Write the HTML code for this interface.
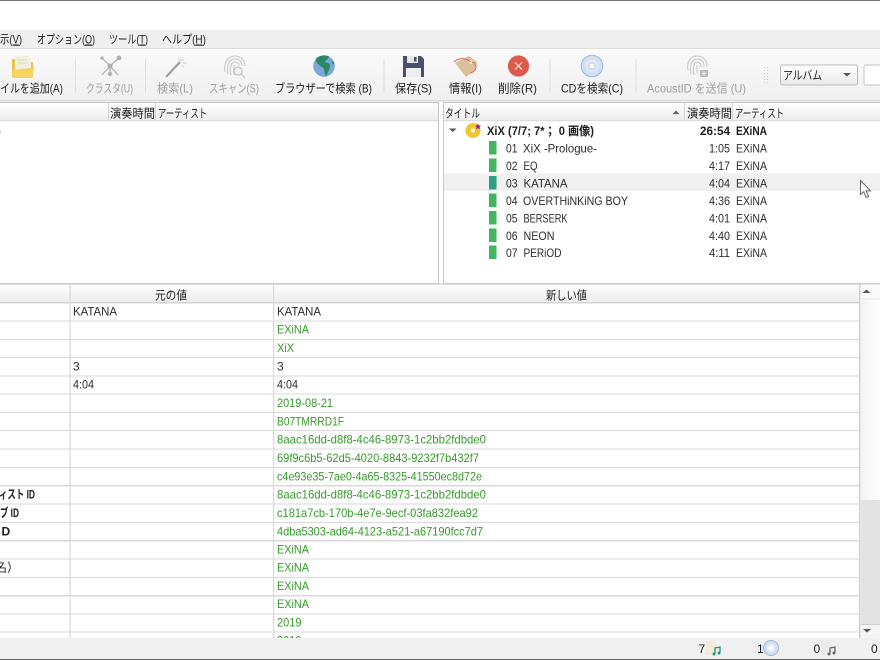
<!DOCTYPE html>
<html lang="ja"><head><meta charset="utf-8"><title>MusicBrainz Picard</title>
<style>
html,body{margin:0;padding:0;width:880px;height:660px;overflow:hidden;background:#fff}
svg{display:block;filter:blur(.3px)}
text{font-family:"Liberation Sans","Noto Sans CJK JP",sans-serif;font-size:12px;fill:#2c2c2c;lengthAdjust:spacingAndGlyphs}
.g{fill:#a0a0a0}.n{fill:#359a29}.b{font-weight:bold;fill:#1c1c1c}.d{fill:#1c1c1c}
</style></head><body>
<svg width="880" height="660" viewBox="0 0 880 660" xmlns="http://www.w3.org/2000/svg">
<defs>
<linearGradient id="tb" x1="0" y1="0" x2="0" y2="1"><stop offset="0" stop-color="#fafafa"/><stop offset="1" stop-color="#f0f0f0"/></linearGradient>
<linearGradient id="hd" x1="0" y1="0" x2="0" y2="1"><stop offset="0" stop-color="#fdfdfd"/><stop offset="1" stop-color="#ececec"/></linearGradient>
<linearGradient id="cb" x1="0" y1="0" x2="0" y2="1"><stop offset="0" stop-color="#fff"/><stop offset="1" stop-color="#e9e9e9"/></linearGradient>
<linearGradient id="th" x1="0" y1="0" x2="1" y2="0"><stop offset="0" stop-color="#f4f4f4"/><stop offset="1" stop-color="#fefefe"/></linearGradient>
</defs>
<rect width="880" height="660" fill="#fff"/>
<rect width="880" height="1" fill="#747474"/>
<!-- menu -->
<rect y="30" width="880" height="18" fill="#efefef"/>
<rect y="48" width="880" height="1" fill="#dcdcdc"/>
<text x="0" y="43.500" class="d" textLength="22" lengthAdjust="spacingAndGlyphs">示(<tspan text-decoration="underline">V</tspan>)</text>
<text x="37" y="43.500" class="d" textLength="58" lengthAdjust="spacingAndGlyphs">オプション(<tspan text-decoration="underline">O</tspan>)</text>
<text x="109" y="43.500" class="d" textLength="39" lengthAdjust="spacingAndGlyphs">ツール(<tspan text-decoration="underline">T</tspan>)</text>
<text x="162" y="43.500" class="d" textLength="44" lengthAdjust="spacingAndGlyphs">ヘルプ(<tspan text-decoration="underline">H</tspan>)</text>
<!-- toolbar -->
<rect y="49" width="880" height="51" fill="url(#tb)"/>
<rect y="100" width="880" height="1.500" fill="#dadada"/>
<g fill="#dedede"><rect x="75" y="59" width="1" height="33"/><rect x="145" y="59" width="1" height="33"/><rect x="383.500" y="59" width="1" height="33"/><rect x="549.500" y="59" width="1" height="33"/><rect x="635.500" y="59" width="1" height="33"/></g>
<!-- folder -->
<path d="M12 59h8l2 3h11v15H12z" fill="#e8c44f"/>
<path d="M15 56h13l3 3v12H15z" fill="#f2eedd"/>
<path d="M18 60h9M18 63h9" stroke="#e0dbc6" stroke-width="1"/>
<path d="M12 70l20-2 2 0-2 10H13z" fill="#f5d35e"/>
<!-- cluster -->
<g stroke="#b0b0b0" stroke-width="1.200" fill="#b0b0b0"><path d="M110 66L102 58M110 66L119 58M110 66L102 75M110 66L118 75M110 66V74" fill="none"/><circle cx="110" cy="66" r="2"/><circle cx="102" cy="58" r="1"/><circle cx="119" cy="58" r="1.800"/><circle cx="110" cy="74" r="1.500"/></g>
<!-- wand -->
<path d="M166 77L180 62" stroke="#a0a0a0" stroke-width="2.200"/>
<path d="M181 57v4M184 59l-2 2M187 63h-4M184 67l-2-2M178 58l2 3" stroke="#d2d2d2" stroke-width="1" fill="none"/>
<!-- fingerprint -->
<g fill="none" stroke="#cfcfcf" stroke-width="1.200"><path d="M225 72C223 60 230 56 235 56C241 56 245 61 245 66"/><path d="M228 74C226 63 230 59 235 59C240 59 242 62 242 66"/><path d="M231 75C229 66 232 62 235 62C238 62 239 64 239 66"/><path d="M234 75C233 70 234 66 235 65"/></g>
<circle cx="238" cy="71" r="4" fill="#f3f3f3" stroke="#c4c4c4" stroke-width="1.200"/><path d="M241 74l4 4" stroke="#c4c4c4" stroke-width="1.200"/>
<!-- globe -->
<circle cx="324" cy="66" r="10.800" fill="#7ba7d9"/>
<path d="M316 58.500C320 55 326 55 329 56.500L327 60C324 60 325 63 328 63C331 64 330 67 329 70L326 76.500C324 72 325 69 322 67C319 66 318 63 316 62z" fill="#2c8a63"/>
<path d="M332 60l2.500 3-2 2z" fill="#2c8a63"/>
<!-- floppy -->
<path d="M403 56h18l3 3v18h-21z" fill="#47506f"/>
<rect x="407" y="56" width="11" height="7" fill="#e6e6e6"/><rect x="414" y="57" width="2.500" height="4.500" fill="#47506f"/>
<rect x="406" y="68" width="15" height="9" fill="#eeeeee"/>
<!-- tag -->
<path d="M455 63L469 56L477 62L476 69L466 77z" fill="#dcc09a"/>
<circle cx="471" cy="62" r="1.800" fill="#f8f8f8"/>
<path d="M471 62C465 57 458 58 454 62M472 62C478 64 477 72 470 73" fill="none" stroke="#dd6555" stroke-width="1"/>
<!-- delete -->
<circle cx="518.500" cy="66" r="10.600" fill="#dd5a4c"/>
<path d="M515 62.500l7 7M522 62.500l-7 7" stroke="#fbe6e3" stroke-width="1.200"/>
<!-- cd -->
<circle cx="592" cy="66" r="10.800" fill="#cfdff5" stroke="#9db8e2" stroke-width="1"/>
<circle cx="592" cy="66" r="6.500" fill="#e4e8ee"/><circle cx="592" cy="66" r="3" fill="#fff" stroke="#c6cad2" stroke-width="1"/>
<!-- acoustid -->
<g fill="none" stroke="#cfcfcf" stroke-width="1.200"><path d="M688 71C686 60 692 56 697 56C703 56 707 60 707 67"/><path d="M691 74C689 63 693 59 697 59C702 59 704 62 704 67"/><path d="M694 75C692 66 695 62 697 62C700 62 701 64 701 67"/><path d="M697 73V65"/></g>
<rect x="700" y="70" width="8" height="7" fill="#bdbdbd"/><path d="M704 71.500v4M702 73.500h4" stroke="#eee" stroke-width="1"/>
<!-- grip -->
<g fill="#d0d0d0"><rect x="764" y="67" width="1" height="1"/><rect x="767" y="67" width="1" height="1"/><rect x="764" y="70" width="1" height="1"/><rect x="767" y="70" width="1" height="1"/><rect x="764" y="73" width="1" height="1"/><rect x="767" y="73" width="1" height="1"/><rect x="764" y="76" width="1" height="1"/><rect x="767" y="76" width="1" height="1"/><rect x="764" y="79" width="1" height="1"/><rect x="767" y="79" width="1" height="1"/><rect x="764" y="82" width="1" height="1"/><rect x="767" y="82" width="1" height="1"/></g>
<!-- combo -->
<rect x="780.500" y="65" width="77" height="20" rx="2" fill="url(#cb)" stroke="#bcbcbc"/>
<text x="783" y="79.500" class="d" textLength="39" lengthAdjust="spacingAndGlyphs">アルバム</text>
<path d="M843 73h8l-4 3.500z" fill="#555"/>
<rect x="864" y="65" width="20" height="20" rx="2" fill="#fff" stroke="#c4c4c4"/>
<!-- toolbar labels -->
<text x="0" y="92.500" class="d" textLength="63" lengthAdjust="spacingAndGlyphs">イルを追加(A)</text>
<text x="86" y="92.500" class="g" textLength="47" lengthAdjust="spacingAndGlyphs">クラスタ(U)</text>
<text x="157" y="92.500" class="g" textLength="36" lengthAdjust="spacingAndGlyphs">検索(L)</text>
<text x="209" y="92.500" class="g" textLength="50" lengthAdjust="spacingAndGlyphs">スキャン(S)</text>
<text x="275" y="92.500" class="d" textLength="97" lengthAdjust="spacingAndGlyphs">ブラウザーで検索 (B)</text>
<text x="395" y="92.500" class="d" textLength="37" lengthAdjust="spacingAndGlyphs">保存(S)</text>
<text x="449" y="92.500" class="d" textLength="33" lengthAdjust="spacingAndGlyphs">情報(I)</text>
<text x="498" y="92.500" class="d" textLength="39" lengthAdjust="spacingAndGlyphs">削除(R)</text>
<text x="561" y="92.500" class="d" textLength="62" lengthAdjust="spacingAndGlyphs">CDを検索(C)</text>
<text x="647" y="92.500" class="g" textLength="99" lengthAdjust="spacingAndGlyphs">AcoustID を送信 (U)</text>
<!-- upper panels -->
<rect x="-2" y="102.500" width="440.500" height="181" fill="#fff" stroke="#c8c8c8"/>
<rect x="443.500" y="102.500" width="440" height="181" fill="#fff" stroke="#c8c8c8"/>
<rect x="0" y="103" width="438" height="17" fill="url(#hd)"/>
<rect x="444" y="103" width="436" height="17" fill="url(#hd)"/>
<rect x="0" y="120" width="438" height="1.200" fill="#dcdcdc"/>
<rect x="444" y="120" width="436" height="1.200" fill="#dcdcdc"/>
<g fill="#d4d4d4"><rect x="108" y="103" width="1" height="17"/><rect x="155" y="103" width="1" height="17"/><rect x="684" y="103" width="1" height="17"/><rect x="732" y="103" width="1" height="17"/></g>
<text x="110" y="117.500" class="d" textLength="45" lengthAdjust="spacingAndGlyphs">演奏時間</text>
<text x="158" y="117.500" class="d" textLength="49" lengthAdjust="spacingAndGlyphs">アーティスト</text>
<text x="445" y="117.500" class="d" textLength="35" lengthAdjust="spacingAndGlyphs">タイトル</text>
<path d="M672.500 114h7l-3.500-3.500z" fill="#666"/>
<text x="687" y="117.500" class="d" textLength="45" lengthAdjust="spacingAndGlyphs">演奏時間</text>
<text x="735" y="117.500" class="d" textLength="49" lengthAdjust="spacingAndGlyphs">アーティスト</text>
<text x="-3" y="135">)</text>
<!-- tree -->
<rect x="444" y="173.500" width="436" height="17.500" fill="#f0f0f0"/>
<path d="M449 128.500h7.500l-3.750 3.500z" fill="#555"/>
<circle cx="473" cy="130.500" r="7.500" fill="#f2c52f"/><circle cx="473" cy="130.500" r="2" fill="#fff"/>
<path d="M478 123.500l1 2 2 .3-1.500 1.400.4 2-1.900-1-1.900 1 .4-2-1.500-1.400 2-.3z" fill="#8e2b92"/>
<text x="487" y="135" class="b" textLength="107" lengthAdjust="spacingAndGlyphs">XiX (7/7; 7*； 0 画像)</text>
<text x="700" y="135" class="b" textLength="30" lengthAdjust="spacingAndGlyphs">26:54</text>
<text x="736" y="135" class="b" textLength="31" lengthAdjust="spacingAndGlyphs">EXiNA</text>
<g fill="#40b75f"><rect x="489" y="141" width="7.500" height="13.500"/><rect x="489" y="158.500" width="7.500" height="13.500"/><rect x="489" y="193.500" width="7.500" height="13.500"/><rect x="489" y="211" width="7.500" height="13.500"/><rect x="489" y="228.500" width="7.500" height="13.500"/><rect x="489" y="245.500" width="7.500" height="13.500"/></g>
<rect x="489" y="176" width="7.500" height="13.500" fill="#2d9f85"/>
<text x="506" y="152.500" textLength="11.500" lengthAdjust="spacingAndGlyphs">01</text><text x="523" y="152.500" textLength="74" lengthAdjust="spacingAndGlyphs">XiX -Prologue-</text><text x="709" y="152.500" textLength="21" lengthAdjust="spacingAndGlyphs">1:05</text><text x="736" y="152.500" textLength="31" lengthAdjust="spacingAndGlyphs">EXiNA</text>
<text x="506" y="170" textLength="11.500" lengthAdjust="spacingAndGlyphs">02</text><text x="523.500" y="170" textLength="14" lengthAdjust="spacingAndGlyphs">EQ</text><text x="709" y="170" textLength="21" lengthAdjust="spacingAndGlyphs">4:17</text><text x="736" y="170" textLength="31" lengthAdjust="spacingAndGlyphs">EXiNA</text>
<text x="506" y="187.500" textLength="11.500" lengthAdjust="spacingAndGlyphs">03</text><text x="523.500" y="187.500" textLength="44" lengthAdjust="spacingAndGlyphs">KATANA</text><text x="709" y="187.500" textLength="21" lengthAdjust="spacingAndGlyphs">4:04</text><text x="736" y="187.500" textLength="31" lengthAdjust="spacingAndGlyphs">EXiNA</text>
<text x="506" y="205" textLength="11.500" lengthAdjust="spacingAndGlyphs">04</text><text x="523" y="205" textLength="105" lengthAdjust="spacingAndGlyphs">OVERTHiNKiNG BOY</text><text x="709" y="205" textLength="21" lengthAdjust="spacingAndGlyphs">4:36</text><text x="736" y="205" textLength="31" lengthAdjust="spacingAndGlyphs">EXiNA</text>
<text x="506" y="222.500" textLength="11.500" lengthAdjust="spacingAndGlyphs">05</text><text x="523.500" y="222.500" textLength="44" lengthAdjust="spacingAndGlyphs">BERSERK</text><text x="709" y="222.500" textLength="21" lengthAdjust="spacingAndGlyphs">4:01</text><text x="736" y="222.500" textLength="31" lengthAdjust="spacingAndGlyphs">EXiNA</text>
<text x="506" y="240" textLength="11.500" lengthAdjust="spacingAndGlyphs">06</text><text x="523.500" y="240" textLength="31" lengthAdjust="spacingAndGlyphs">NEON</text><text x="709" y="240" textLength="21" lengthAdjust="spacingAndGlyphs">4:40</text><text x="736" y="240" textLength="31" lengthAdjust="spacingAndGlyphs">EXiNA</text>
<text x="506" y="257" textLength="11.500" lengthAdjust="spacingAndGlyphs">07</text><text x="523.500" y="257" textLength="38" lengthAdjust="spacingAndGlyphs">PERiOD</text><text x="709" y="257" textLength="21" lengthAdjust="spacingAndGlyphs">4:11</text><text x="736" y="257" textLength="31" lengthAdjust="spacingAndGlyphs">EXiNA</text>
<!-- cursor -->
<path d="M860.500 180.500v14l3.200-2.800 2.300 5.800 2.600-1-2.400-5.600h4.300z" fill="#fff" stroke="#666" stroke-width="1"/>
<!-- table -->
<rect x="0" y="283.500" width="880" height="1.200" fill="#d0d0d0"/>
<rect x="0" y="285" width="859" height="17.500" fill="url(#hd)"/>
<rect x="0" y="302" width="859" height="1.500" fill="#d4d4d4"/>
<text x="155" y="299.500" class="d" textLength="32" lengthAdjust="spacingAndGlyphs">元の値</text>
<text x="546" y="299.500" class="d" textLength="41" lengthAdjust="spacingAndGlyphs">新しい値</text>
<g fill="#d9d9d9"><rect x="0" y="320.500" width="859" height="1"/><rect x="0" y="339" width="859" height="1"/><rect x="0" y="357" width="859" height="1"/><rect x="0" y="375.500" width="859" height="1"/><rect x="0" y="393.500" width="859" height="1"/><rect x="0" y="412" width="859" height="1"/><rect x="0" y="430" width="859" height="1"/><rect x="0" y="448.500" width="859" height="1"/><rect x="0" y="467" width="859" height="1"/><rect x="0" y="485" width="859" height="1.500"/><rect x="0" y="503.500" width="859" height="1"/><rect x="0" y="522" width="859" height="1"/><rect x="0" y="540" width="859" height="1.500"/><rect x="0" y="558.500" width="859" height="1"/><rect x="0" y="577" width="859" height="1"/><rect x="0" y="595" width="859" height="1.500"/><rect x="0" y="613.500" width="859" height="1"/><rect x="0" y="631.500" width="859" height="1"/><rect x="69.500" y="285" width="1.200" height="353"/><rect x="273" y="285" width="1.200" height="353"/></g>
<text x="73" y="315.500" textLength="44" lengthAdjust="spacingAndGlyphs">KATANA</text><text x="277" y="315.500" textLength="44" lengthAdjust="spacingAndGlyphs">KATANA</text>
<text x="277" y="333.500" class="n" textLength="32" lengthAdjust="spacingAndGlyphs">EXiNA</text>
<text x="277" y="352" class="n" textLength="17" lengthAdjust="spacingAndGlyphs">XiX</text>
<text x="73" y="370.500">3</text><text x="277" y="370.500">3</text>
<text x="73" y="388.500" textLength="21" lengthAdjust="spacingAndGlyphs">4:04</text><text x="277" y="388.500" textLength="21" lengthAdjust="spacingAndGlyphs">4:04</text>
<text x="277" y="407" class="n" textLength="56" lengthAdjust="spacingAndGlyphs">2019-08-21</text>
<text x="277" y="425.500" class="n" textLength="67" lengthAdjust="spacingAndGlyphs">B07TMRRD1F</text>
<text x="277" y="443.500" class="n" textLength="209" lengthAdjust="spacingAndGlyphs">8aac16dd-d8f8-4c46-8973-1c2bb2fdbde0</text>
<text x="277" y="462" class="n" textLength="202" lengthAdjust="spacingAndGlyphs">69f9c6b5-62d5-4020-8843-9232f7b432f7</text>
<text x="277" y="480.500" class="n" textLength="205" lengthAdjust="spacingAndGlyphs">c4e93e35-7ae0-4a65-8325-41550ec8d72e</text>
<text x="277" y="498.500" class="n" textLength="209" lengthAdjust="spacingAndGlyphs">8aac16dd-d8f8-4c46-8973-1c2bb2fdbde0</text>
<text x="277" y="517" class="n" textLength="201" lengthAdjust="spacingAndGlyphs">c181a7cb-170b-4e7e-9ecf-03fa832fea92</text>
<text x="277" y="535.500" class="n" textLength="206" lengthAdjust="spacingAndGlyphs">4dba5303-ad64-4123-a521-a67190fcc7d7</text>
<text x="277" y="553.500" class="n" textLength="32" lengthAdjust="spacingAndGlyphs">EXiNA</text>
<text x="277" y="571.500" class="n" textLength="32" lengthAdjust="spacingAndGlyphs">EXiNA</text>
<text x="277" y="590" class="n" textLength="32" lengthAdjust="spacingAndGlyphs">EXiNA</text>
<text x="277" y="608" class="n" textLength="32" lengthAdjust="spacingAndGlyphs">EXiNA</text>
<text x="277" y="626.500" class="n" textLength="24.500" lengthAdjust="spacingAndGlyphs">2019</text>
<text x="277" y="644.500" class="n" textLength="24.500" lengthAdjust="spacingAndGlyphs">2019</text>
<text x="-1" y="498.500" class="b" textLength="36" lengthAdjust="spacingAndGlyphs">ィスト ID</text>
<text x="0" y="517" class="b" textLength="19" lengthAdjust="spacingAndGlyphs">ブ ID</text>
<text x="1.500" y="535.500" class="b">D</text>
<text x="-5" y="571.500" class="d" textLength="24" lengthAdjust="spacingAndGlyphs">名）</text>
<!-- scrollbar -->
<rect x="859" y="284.500" width="21" height="353.500" fill="#fff"/>
<rect x="859" y="284.500" width="1.500" height="353.500" fill="#cfcfcf"/>
<rect x="861" y="285" width="19" height="14" fill="#fafafa"/>
<rect x="861" y="298.500" width="19" height="1" fill="#e4e4e4"/>
<path d="M862.500 293h8l-4-3.500z" fill="#555"/>
<rect x="861" y="300" width="19" height="200" fill="url(#th)"/>
<rect x="861" y="500" width="19" height="124" fill="#e3e3e3"/>
<rect x="861" y="624" width="19" height="1" fill="#cfcfcf"/>
<rect x="861" y="625" width="19" height="13" fill="#f5f5f5"/>
<path d="M863 629h8l-4 3.500z" fill="#555"/>
<!-- status -->
<rect y="638" width="880" height="21" fill="#f0f0f0"/>
<rect y="659" width="880" height="1" fill="#666"/>
<text x="698.500" y="653" class="d">7</text>
<path d="M706 641h7l4 4v10h-11z" fill="#f0ead6"/>
<path d="M715 653v-5l5-1v5" fill="none" stroke="#1e8f8f" stroke-width="1.300"/><circle cx="714" cy="654" r="1.500" fill="#1e8f8f"/><circle cx="719" cy="653" r="1.500" fill="#1e8f8f"/>
<text x="757" y="653" class="d">1</text>
<circle cx="771" cy="648" r="7.500" fill="#cfdff5" stroke="#9db8e2" stroke-width="1"/><circle cx="771" cy="648" r="4.500" fill="#e8ebf0"/><circle cx="771" cy="648" r="2" fill="#fff"/>
<text x="813.500" y="653" class="d">0</text>
<path d="M821 641h7l4 4v10h-11z" fill="#ebebeb"/>
<path d="M830 653v-5l5-1v5" fill="none" stroke="#666" stroke-width="1.300"/><circle cx="829" cy="654" r="1.500" fill="#666"/><circle cx="834" cy="653" r="1.500" fill="#666"/>
<text x="871" y="653" class="d">0</text>
</svg>
</body></html>
